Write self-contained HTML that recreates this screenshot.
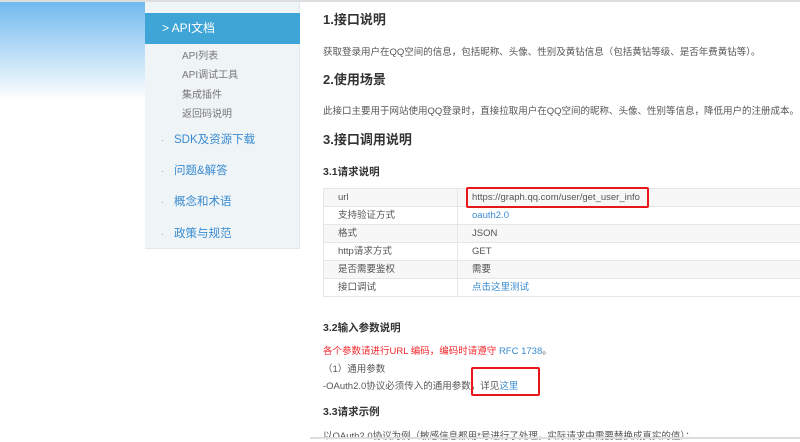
<!DOCTYPE html>
<html><head><meta charset="utf-8"><style>
*{margin:0;padding:0;box-sizing:border-box}
body{width:800px;height:442px;overflow:hidden;background:#fff;font-family:"Liberation Sans","Noto Sans CJK SC",sans-serif;position:relative;color:#555}
.grad{position:absolute;left:0;top:0;width:145px;height:100px;background:linear-gradient(#6fb8ee,#fff)}
.topline{position:absolute;left:0;top:0;width:800px;height:2px;background:#ddd}
.side{position:absolute;left:145px;top:2px;width:155px;height:247px;background:#eff4f7;border-right:1px solid #e2e8ec;border-bottom:1px solid #e2e8ec}
.act{position:absolute;left:0;top:11px;width:155px;height:31px;background:#3ea5d6;color:#fff;font-size:12px;line-height:31px;padding-left:17px}
.sub{position:absolute;left:37px;font-size:10px;color:#777}
.nav{position:absolute;left:16px;font-size:11.5px;color:#3a8bd0}
.nav b{font-weight:normal;color:#999;margin-right:10px;font-size:9px}
h2{position:absolute;left:323px;font-size:13px;color:#333;font-weight:bold}
h3{position:absolute;left:323px;font-size:10.5px;color:#333;font-weight:bold}
p{position:absolute;left:323px;font-size:9.5px;color:#555;white-space:nowrap}
table{position:absolute;left:323px;top:188px;width:490px;border-collapse:collapse;font-size:9.5px}
td{height:18px;line-height:14px;border:1px solid #e6e6e6;padding:0 0 0 14px;color:#555;vertical-align:middle}
td:first-child{width:134px}
tr:nth-child(odd) td{background:#f7f7f7}
.l{color:#3a8bd0}
.box{position:absolute;border:2px solid #e8161a;border-radius:2px}
.bot{position:absolute;left:310px;top:437px;width:490px;height:2px;background:#ddd}
</style></head><body>
<div class="grad"></div><div class="topline"></div>
<div class="side">
<div class="act">&gt; API文档</div>
<div class="sub" style="top:45px">API列表</div>
<div class="sub" style="top:64px">API调试工具</div>
<div class="sub" style="top:84px">集成插件</div>
<div class="sub" style="top:103px">返回码说明</div>
<div class="nav" style="top:129px"><b>·</b>SDK及资源下载</div>
<div class="nav" style="top:160px"><b>·</b>问题&amp;解答</div>
<div class="nav" style="top:191px"><b>·</b>概念和术语</div>
<div class="nav" style="top:223px"><b>·</b>政策与规范</div>
</div>
<h2 style="top:9px">1.接口说明</h2>
<p style="top:44px">获取登录用户在QQ空间的信息，包括昵称、头像、性别及黄钻信息（包括黄钻等级、是否年费黄钻等）。</p>
<h2 style="top:69px">2.使用场景</h2>
<p style="top:103px">此接口主要用于网站使用QQ登录时，直接拉取用户在QQ空间的昵称、头像、性别等信息，降低用户的注册成本。</p>
<h2 style="top:129px">3.接口调用说明</h2>
<h3 style="top:164px">3.1请求说明</h3>
<table>
<tr><td>url</td><td>https://graph.qq.com/user/get_user_info</td></tr>
<tr><td>支持验证方式</td><td class="l">oauth2.0</td></tr>
<tr><td>格式</td><td>JSON</td></tr>
<tr><td>http请求方式</td><td>GET</td></tr>
<tr><td>是否需要鉴权</td><td>需要</td></tr>
<tr><td>接口调试</td><td class="l">点击这里测试</td></tr>
</table>
<div class="box" style="left:466px;top:187px;width:183px;height:21px"></div>
<h3 style="top:320px">3.2输入参数说明</h3>
<p style="top:343px"><span style="color:#f0282c">各个参数请进行URL 编码，编码时请遵守 </span><span class="l">RFC 1738</span>。</p>
<p style="top:361px">（1）通用参数</p>
<p style="top:378px">-OAuth2.0协议必须传入的通用参数，详见<span class="l">这里</span></p>
<div class="box" style="left:471px;top:367px;width:69px;height:29px"></div>
<h3 style="top:404px">3.3请求示例</h3>
<p style="top:428px">以OAuth2.0协议为例（敏感信息都用*号进行了处理，实际请求中需要替换成真实的值）：</p>
<div class="bot"></div>
</body></html>
